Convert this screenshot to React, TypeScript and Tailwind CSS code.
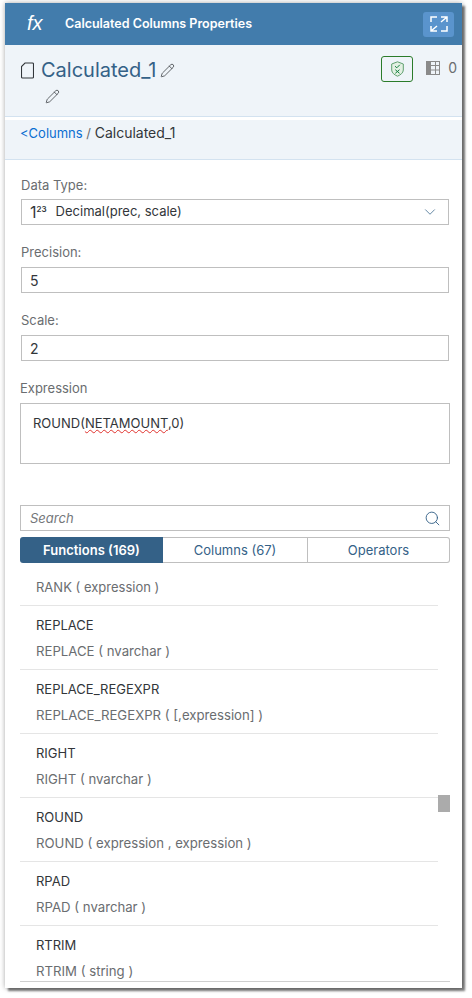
import { ChevronDown, Pencil, Search } from "lucide-react"

const fnRows = [
  { name: "REPLACE", sig: "REPLACE ( nvarchar )" },
  { name: "REPLACE_REGEXPR", sig: "REPLACE_REGEXPR ( [,expression] )" },
  { name: "RIGHT", sig: "RIGHT ( nvarchar )" },
  { name: "ROUND", sig: "ROUND ( expression , expression )" },
  { name: "RPAD", sig: "RPAD ( nvarchar )" },
]

function ExpandIcon() {
  return (
    <svg width="18" height="16" viewBox="0 0 18 16" fill="none" stroke="white" strokeWidth="1.5">
      <path d="M1 6V1h6M11 15h6v-5" />
      <path d="M11 1h6v5M17 1l-6 5M1 10v5h6M1 15l6-5" />
    </svg>
  )
}

function DocIcon() {
  return (
    <svg width="13" height="17" viewBox="0 0 13 17" fill="none" stroke="#32363a" strokeWidth="1.1">
      <path d="M4 1h7.500a1 1 0 0 1 1 1v13a1 1 0 0 1-1 1h-10a1 1 0 0 1-1-1V4.500z" />
    </svg>
  )
}

function ShieldIcon() {
  return (
    <svg width="13" height="16" viewBox="0 0 13 16" fill="none" stroke="#107e3e" strokeWidth="1">
      <path d="M6.500 .8 12.300 3v6c0 3-3 5-5.800 6.200C3.700 14 .7 12 .7 9V3z" fill="#e3f0e3" stroke="#5f9f6f" />
      <path d="M4 5.200l1.800 1.600 3-3M4.300 8.700l4.200 3.600M8.500 8.700l-4.200 3.600" />
    </svg>
  )
}

function TableIcon() {
  return (
    <svg width="14" height="14" viewBox="0 0 14 14">
      <rect x=".5" y=".5" width="13" height="13" fill="none" stroke="#8a8a8a" />
      <rect x="0" y="0" width="5" height="14" fill="#8a8a8a" />
      <path d="M5 4.500h9M5 9h9M9.500 0v14" stroke="#8a8a8a" />
    </svg>
  )
}

function Field({ label, value }: { label: string; value: string }) {
  return (
    <div className="mt-[19px]">
      <div className="h-[16px] text-[13px] leading-[16px] text-[#6a6d70]">{label}</div>
      <div className="mt-[7px] flex h-[26px] items-center border border-[#bfbfbf] pl-[8px] text-[14px] text-[#32363a]">
        {value}
      </div>
    </div>
  )
}

export default function App() {
  return (
    <div className="h-[998px] w-[472px] overflow-hidden bg-white pl-[5px] pt-[3px] font-['Inter',sans-serif]">
      <div className="relative flex h-[985px] w-[457px] flex-col bg-white shadow-[0_0_5px_rgba(0,0,0,0.35),3px_3px_2px_rgba(0,0,0,0.5)]">
        <header className="flex h-[42px] shrink-0 items-center bg-[#427cac] pl-[22px] pr-[8px]">
          <span className="w-[38px] pb-[2px] font-['Liberation_Sans',sans-serif] text-[20px] italic leading-none text-white">fx</span>
          <span className="flex-1 pt-[1px] text-[12.500px] font-semibold text-white">Calculated Columns Properties</span>
          <button className="flex h-[25px] w-[31px] items-center justify-center rounded-[3px] bg-[#5a94cd]">
            <ExpandIcon />
          </button>
        </header>

        <section className="flex h-[72px] shrink-0 justify-between border-b border-[#d3e2f0] bg-[#eff4f9] pl-[16px] pr-[5px]">
          <div>
            <div className="mt-[12px] flex items-center">
              <DocIcon />
              <span className="ml-[7px] text-[20px] leading-[26px] text-[#346187]">Calculated_1</span>
              <Pencil size={15} strokeWidth={1.2} className="ml-[4px] text-[#32363a]" />
            </div>
            <Pencil size={15} strokeWidth={1.2} className="ml-[24px] mt-[6px] text-[#32363a]" />
          </div>
          <div className="mt-[11px] flex h-[26px] items-start">
            <div className="flex h-[26px] w-[32px] items-center justify-center rounded-[3px] border border-[#2b7c2b]">
              <ShieldIcon />
            </div>
            <div className="ml-[13px] mt-[5px]"><TableIcon /></div>
            <span className="ml-[8px] mt-[1px] text-[14px] text-[#6a6d70]">0</span>
          </div>
        </section>

        <nav className="mt-[3px] h-[40px] shrink-0 border-b border-[#d3e2f0] bg-[#eff4f9] pl-[15px] pt-[4px] text-[13px] leading-[18px]">
          <span className="text-[#0a6ed1]">&lt;Columns</span>
          <span className="text-[#6a6d70]"> / </span>
          <span className="text-[14px] text-[#32363a]">Calculated_1</span>
        </nav>

        <div className="pl-[16px] pr-[13px] pt-[7px]">
          <div className="mt-[10px]">
            <div className="h-[16px] text-[13px] leading-[16px] text-[#6a6d70]">Data Type:</div>
            <div className="mt-[6px] flex h-[26px] items-center border border-[#bfbfbf] pl-[8px] pr-[9px] text-[13px] text-[#32363a]">
              <span className="text-[16px] leading-none">1</span>
              <span className="mb-[6px] text-[8px] font-semibold leading-none">23</span>
              <span className="ml-[9px] flex-1">Decimal(prec, scale)</span>
              <ChevronDown size={18} strokeWidth={1} className="text-[#346187]" />
            </div>
          </div>
          <Field label="Precision:" value="5" />
          <Field label="Scale:" value="2" />
        </div>

        <div className="pl-[15px] pr-[12px] pt-[19px]">
          <div className="h-[16px] text-[13px] leading-[16px] text-[#6a6d70]">Expression</div>
          <div className="mt-[7px] h-[61px] border border-[#bfbfbf] pl-[12px] pt-[10px] text-[13px] leading-[18px] text-[#32363a]">
            ROUND(<span className="underline decoration-[#e0322d] decoration-wavy decoration-1">NETAMOUNT</span>,0)
          </div>

          <div className="mt-[41px] flex h-[26px] items-center justify-between border border-[#bfbfbf] pl-[9px] pr-[8px]">
            <span className="pt-[1px] text-[13px] italic text-[#74777a]">Search</span>
            <Search size={17} strokeWidth={1.3} className="text-[#346187]" />
          </div>

          <div className="mt-[6px] flex h-[26px] text-[13px]">
            <div className="flex w-[143px] items-center justify-center rounded-l-[3px] bg-[#346187] pt-[1px] font-semibold text-white">Functions (169)</div>
            <div className="flex w-[145px] items-center justify-center border-y border-r border-[#bfbfbf] pt-[1px] text-[#346187]">Columns (67)</div>
            <div className="flex flex-1 items-center justify-center rounded-r-[3px] border-y border-r border-[#bfbfbf] pt-[1px] text-[#346187]">Operators</div>
          </div>

          <div className="relative h-[419px] overflow-hidden border-b border-[#cfcfcf]">
            <div className="w-[418px]">
              <div className="h-[43px] border-b border-[#e5e5e5] pl-[16px] pt-[15px] text-[13px] leading-[18px] text-[#6a6d70]">RANK ( expression )</div>
              {fnRows.map((row) => (
                <div key={row.name} className="h-[64px] border-b border-[#e5e5e5] pl-[16px] pt-[10px] text-[13px] leading-[18px]">
                  <div className="text-[#32363a]">{row.name}</div>
                  <div className="mt-[8px] text-[13.200px] text-[#6a6d70]">{row.sig}</div>
                </div>
              ))}
              <div className="pl-[16px] pt-[10px] text-[13px] leading-[18px]">
                <div className="text-[#32363a]">RTRIM</div>
                <div className="mt-[8px] text-[13.200px] text-[#6a6d70]">RTRIM ( string )</div>
              </div>
            </div>
            <div className="absolute right-0 top-[232px] h-[17px] w-[12px] bg-[#ababab]" />
          </div>
        </div>
      </div>
    </div>
  )
}
